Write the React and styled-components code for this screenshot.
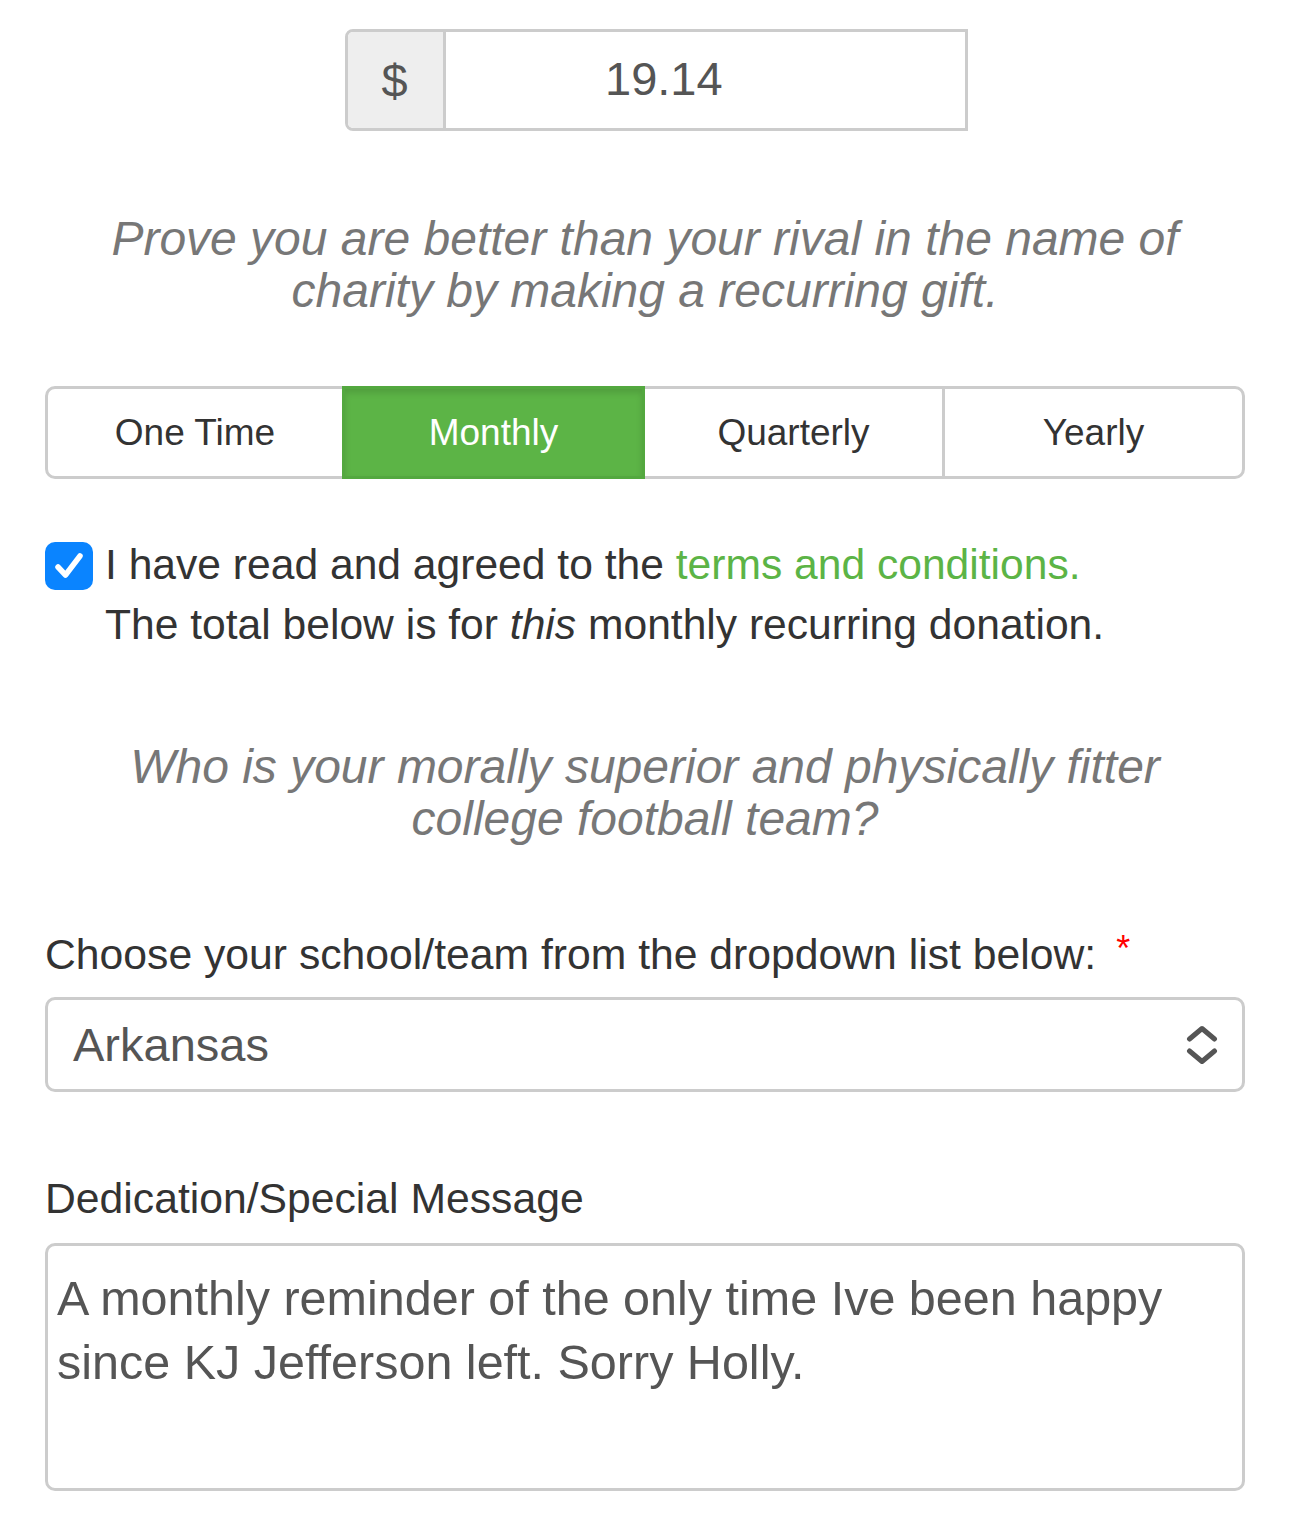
import React from "react";
import styled, { createGlobalStyle } from "styled-components";

const Global = createGlobalStyle`
  html, body { margin: 0; padding: 0; background: #fff; }
  body { font-family: "Liberation Sans", Arial, sans-serif; color: #333; }
  * { box-sizing: border-box; }
`;

const Page = styled.div`
  width: 1290px;
  padding: 29px 45px 24px;
  display: flex;
  flex-direction: column;
`;

const AmountGroup = styled.div`
  display: flex;
  width: 623px;
  height: 102px;
  margin-left: 300px;
  border: 3px solid #ccc;
  border-radius: 8px 0 0 8px;
  overflow: hidden;
`;

const Addon = styled.div`
  flex: none;
  width: 98px;
  display: flex;
  align-items: center;
  justify-content: center;
  background: #eee;
  border-right: 3px solid #ccc;
  font-size: 47px;
  color: #555;
  padding-right: 2px;
`;

const AmountInput = styled.input`
  flex: 1;
  min-width: 0;
  border: none;
  outline: none;
  font-family: "Liberation Sans", Arial, sans-serif;
  font-size: 47px;
  color: #555;
  padding: 0 0 4px 159px;
  background: #fff;
`;

const Lead = styled.p`
  margin: ${(p) => p.$mt}px 0 0;
  text-align: center;
  font-style: italic;
  font-size: 48px;
  line-height: 52px;
  color: #777;
`;

const Segments = styled.div`
  display: grid;
  grid-template-columns: repeat(4, 1fr);
  margin-top: 69px;
  height: 93px;
`;

const Segment = styled.button`
  font-family: "Liberation Sans", Arial, sans-serif;
  font-size: 37px;
  border: 3px solid ${(p) => (p.$active ? "#53a83f" : "#ccc")};
  border-left-width: ${(p) => (p.$active ? "3px" : "0")};
  margin-left: ${(p) => (p.$active ? "-1px" : "0")};
  background: ${(p) => (p.$active ? "#5cb446" : "#fff")};
  color: ${(p) => (p.$active ? "#fff" : "#333")};
  box-shadow: ${(p) => (p.$active ? "inset 0 4px 6px rgba(0,0,0,0.12)" : "none")};
  position: relative;
  z-index: ${(p) => (p.$active ? 1 : 0)};
  padding: 0;
  &:first-child { border-left-width: 3px; border-radius: 10px 0 0 10px; }
  &:last-child { border-radius: 0 10px 10px 0; }
  & + & { border-left-width: 3px; margin-left: -3px; }
`;

const AgreeRow = styled.div`
  display: flex;
  gap: 12px;
  margin-top: 55px;
  align-items: flex-start;
`;

const Check = styled.span`
  flex: none;
  width: 48px;
  height: 48px;
  margin-top: 8px;
  border-radius: 10px;
  background: #0a84ff;
  display: flex;
  align-items: center;
  justify-content: center;
`;

const AgreeText = styled.div`
  font-size: 42.6px;
  line-height: 60px;
  color: #333;
`;

const Link = styled.a`
  color: #5cb446;
  text-decoration: none;
`;

const Label = styled.div`
  margin-top: ${(p) => p.$mt}px;
  font-size: 42.7px;
  line-height: 50px;
  color: #333;
  display: flex;
  align-items: flex-start;
`;

const Required = styled.span`
  color: #f00;
  font-size: 36px;
  line-height: 36px;
  margin-left: 20px;
  margin-top: 2px;
`;

const Select = styled.div`
  flex: none;
  margin-top: 18px;
  height: 95px;
  border: 3px solid #ccc;
  border-radius: 10px;
  display: flex;
  align-items: center;
  justify-content: space-between;
  padding: 0 24px 0 25px;
  font-size: 47px;
  color: #555;
`;

const TextArea = styled.textarea`
  flex: none;
  margin-top: 20px;
  height: 248px;
  border: 3px solid #ccc;
  border-radius: 10px;
  padding: 20px 9px 0;
  font-family: "Liberation Sans", Arial, sans-serif;
  font-size: 48.5px;
  line-height: 64px;
  color: #555;
  resize: none;
  outline: none;
  overflow: hidden;
`;

const options = ["One Time", "Monthly", "Quarterly", "Yearly"];

export default function App() {
  return (
    <>
      <Global />
      <Page>
        <AmountGroup>
          <Addon>$</Addon>
          <AmountInput defaultValue="19.14" />
        </AmountGroup>
        <Lead $mt={82}>
          Prove you are better than your rival in the name of
          <br />
          charity by making a recurring gift.
        </Lead>
        <Segments>
          {options.map((o) => (
            <Segment key={o} $active={o === "Monthly"}>
              {o}
            </Segment>
          ))}
        </Segments>
        <AgreeRow>
          <Check>
            <svg width="34" height="34" viewBox="0 0 34 34">
              <path
                d="M6 18 L13.5 26 L28 7"
                fill="none"
                stroke="#fff"
                strokeWidth="5.5"
                strokeLinecap="round"
                strokeLinejoin="round"
              />
            </svg>
          </Check>
          <AgreeText>
            I have read and agreed to the <Link href="#">terms and conditions.</Link>
            <br />
            The total below is for <i>this</i> monthly recurring donation.
          </AgreeText>
        </AgreeRow>
        <Lead $mt={87}>
          Who is your morally superior and physically fitter
          <br />
          college football team?
        </Lead>
        <Label $mt={84}>
          Choose your school/team from the dropdown list below:
          <Required>*</Required>
        </Label>
        <Select>
          <span>Arkansas</span>
          <svg width="32" height="40" viewBox="0 0 32 40">
            <path
              d="M3.5 14 L16 3.5 L28.5 14 M3.5 26 L16 36.5 L28.5 26"
              fill="none"
              stroke="#555"
              strokeWidth="5"
              strokeLinecap="round"
              strokeLinejoin="round"
            />
          </svg>
        </Select>
        <Label $mt={81}>Dedication/Special Message</Label>
        <TextArea defaultValue="A monthly reminder of the only time Ive been happy since KJ Jefferson left. Sorry Holly." />
      </Page>
    </>
  );
}
